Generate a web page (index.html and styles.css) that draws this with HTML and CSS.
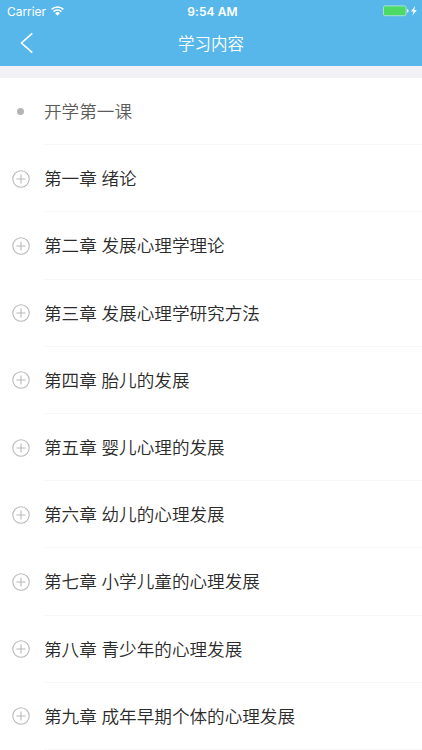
FILE: index.html
```
<!DOCTYPE html>
<html lang="zh-CN">
<head>
    <meta charset="UTF-8">
    <meta name="viewport" content="width=device-width, initial-scale=1.0">
    <title>学习内容</title>
    <link rel="stylesheet" href="styles.css">
</head>
<body>
    <svg width="0" height="0" class="defs">
        <symbol id="plus" viewBox="0 0 18 18">
            <circle cx="9" cy="9" r="8.2"/>
            <path d="M9 4.4v9.2M4.4 9h9.2"/>
        </symbol>
    </svg>

    <header class="header">
        <!-- Status bar -->
        <div class="status">
            <div class="carrier">
                <span>Carrier</span>
                <svg class="wifi" width="13" height="10" viewBox="0 0 13 10">
                    <path d="M0.6 3.4a8.4 8.4 0 0 1 11.8 0M2.6 5.6a5.5 5.5 0 0 1 7.8 0"/>
                    <path class="fill" d="M4.2 7.3a3.2 3.2 0 0 1 4.6 0L6.5 9.7z"/>
                </svg>
            </div>
            <div class="time">9:54 AM</div>
            <div class="power">
                <svg width="35" height="12" viewBox="0 0 35 12">
                    <rect class="battery" x="0.5" y="0.9" width="22.5" height="9.8" rx="1.5"/>
                    <path class="tip" d="M24.2 4c1.8 0.3 1.8 3.5 0 3.8z"/>
                    <path class="bolt" d="M32.2 1L28 6.6h2.5L29.4 10.8l4.4-5.8h-2.6z"/>
                </svg>
            </div>
        </div>
        <!-- Navigation -->
        <div class="nav">
            <svg class="back" width="14" height="22" viewBox="0 0 14 22">
                <path d="M12.3 1.3L1.5 11l10.8 9.6"/>
            </svg>
            <h1 class="title">学习内容</h1>
        </div>
    </header>

    <ul class="list">
        <li class="row intro"><span class="mark"><i class="dot"></i></span><span class="name">开学第一课</span></li>
        <li class="row"><span class="mark"><svg class="plus"><use href="#plus"/></svg></span><span class="name">第一章 绪论</span></li>
        <li class="row"><span class="mark"><svg class="plus"><use href="#plus"/></svg></span><span class="name">第二章 发展心理学理论</span></li>
        <li class="row"><span class="mark"><svg class="plus"><use href="#plus"/></svg></span><span class="name">第三章 发展心理学研究方法</span></li>
        <li class="row"><span class="mark"><svg class="plus"><use href="#plus"/></svg></span><span class="name">第四章 胎儿的发展</span></li>
        <li class="row"><span class="mark"><svg class="plus"><use href="#plus"/></svg></span><span class="name">第五章 婴儿心理的发展</span></li>
        <li class="row"><span class="mark"><svg class="plus"><use href="#plus"/></svg></span><span class="name">第六章 幼儿的心理发展</span></li>
        <li class="row"><span class="mark"><svg class="plus"><use href="#plus"/></svg></span><span class="name">第七章 小学儿童的心理发展</span></li>
        <li class="row"><span class="mark"><svg class="plus"><use href="#plus"/></svg></span><span class="name">第八章 青少年的心理发展</span></li>
        <li class="row"><span class="mark"><svg class="plus"><use href="#plus"/></svg></span><span class="name">第九章 成年早期个体的心理发展</span></li>
    </ul>
</body>
</html>
```
FILE: styles.css
```
body {
    font-family: "Noto Sans CJK SC", sans-serif;
    font-weight: 350;
    height: 750px;
    margin: 0;
    overflow: hidden;
    background-color: #fff;
}

.defs {
    display: none;
}

.header {
    height: 66px;
    background-color: #57b7ea;
    color: #fff;
}

.status {
    display: grid;
    grid-template-columns: 1fr auto 1fr;
    align-items: center;
    height: 22px;
    padding: 0 4px 0 7px;
    font-family: Inter, sans-serif;
    font-size: 12px;
    font-weight: 400;
}

.carrier {
    display: flex;
    align-items: center;
    gap: 5px;
    letter-spacing: -0.05px;
}

.wifi path {
    fill: none;
    stroke: #fff;
    stroke-width: 1.5;
}

.wifi .fill {
    fill: #fff;
    stroke: none;
}

.time {
    font-weight: 600;
    letter-spacing: 0.1px;
}

.power {
    display: flex;
    justify-content: flex-end;
}

.battery {
    fill: #4cd964;
    stroke: #a5e3cf;
    stroke-width: 1;
}

.tip,
.bolt {
    fill: #fff;
}

.nav {
    display: grid;
    grid-template-columns: 1fr auto 1fr;
    align-items: center;
    height: 42px;
    padding: 0 20px;
}

.back {
    fill: none;
    stroke: #fff;
    stroke-width: 1.6;
}

.title {
    margin: 0;
    font-size: 16.5px;
    font-weight: 350;
    line-height: 24px;
}

.list {
    margin: 0;
    padding: 0;
    list-style: none;
    border-top: 12px solid #f1f1f6;
}

.row {
    display: flex;
    height: 67.2px;
    color: #2b2b2b;
}

.mark {
    display: flex;
    align-items: center;
    justify-content: center;
    width: 42px;
    margin-right: 2px;
}

.plus {
    width: 18px;
    height: 18px;
    fill: none;
    stroke: #b8b8b8;
    stroke-width: 1.1;
}

.dot {
    width: 7px;
    height: 7px;
    margin-right: 1px;
    border-radius: 50%;
    background-color: #b5b5b5;
}

.name {
    flex: 1;
    box-sizing: border-box;
    border-bottom: 1px solid #f8f8f8;
    font-size: 17.6px;
    line-height: 66px;
    word-spacing: 0.8px;
}

.intro {
    color: #5c5c5c;
}
```
